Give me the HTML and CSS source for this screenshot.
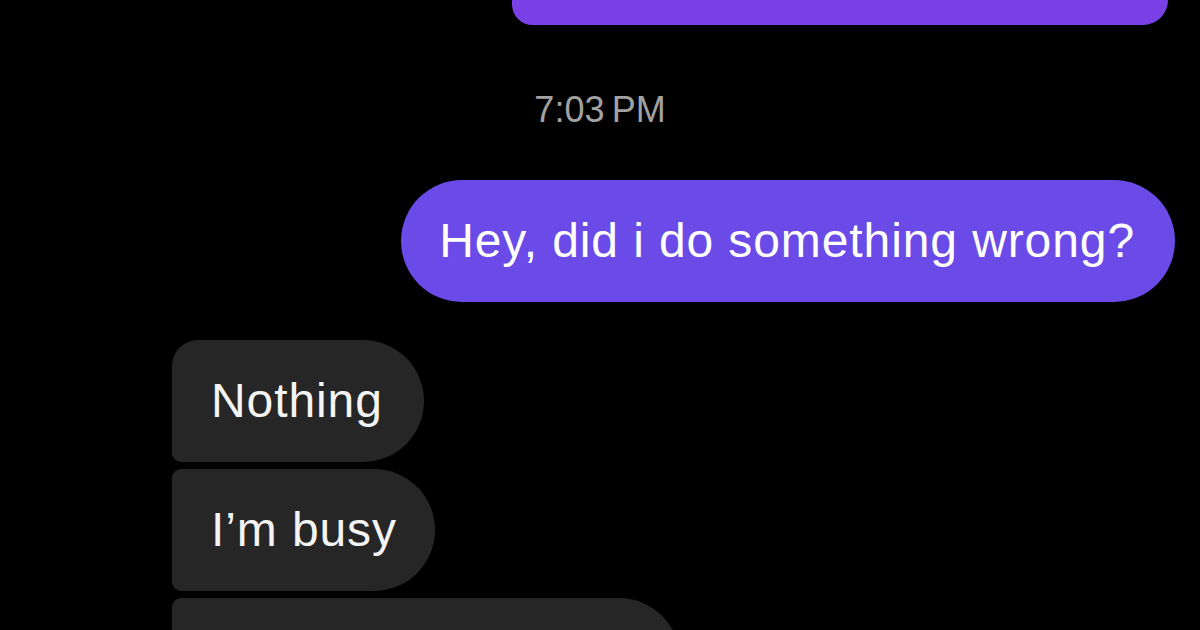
FILE: index.html
```html
<!DOCTYPE html>
<html lang="en">
<head>
<meta charset="utf-8">
<title>Chat</title>
<link rel="stylesheet" href="styles.css">
</head>
<body>
  <main class="thread">
    <div class="row row-out row-prev">
      <div class="bubble bubble-prev"></div>
    </div>
    <div class="time">7:03&#8201;PM</div>
    <div class="row row-out">
      <div class="bubble bubble-out">Hey, did i do something wrong?</div>
    </div>
    <div class="group-in">
      <div class="row row-in">
        <div class="bubble bubble-in first">Nothing</div>
      </div>
      <div class="row row-in">
        <div class="bubble bubble-in middle">I’m busy</div>
      </div>
      <div class="row row-in">
        <div class="bubble bubble-in last wide"></div>
      </div>
    </div>
  </main>
</body>
</html>
```

FILE: styles.css
```css
* { box-sizing: border-box; }

html, body {
  margin: 0;
  padding: 0;
  background: #000;
  width: 1200px;
  height: 630px;
  overflow: hidden;
}

body {
  font-family: "Liberation Sans", Arial, sans-serif;
  color: #f4f4f4;
}

.thread {
  display: flex;
  flex-direction: column;
  width: 1200px;
}

.row {
  display: flex;
}

.row-out {
  justify-content: flex-end;
  padding-right: 25px;
}

.row-prev {
  padding-right: 32px;
}

.row-in {
  justify-content: flex-start;
  padding-left: 172px;
}

.bubble {
  font-size: 48px;
  letter-spacing: 0.9px;
  line-height: 56px;
  height: 122px;
  padding: 33px 41px 33px 39px;
  white-space: nowrap;
}

.bubble-prev {
  width: 656px;
  height: 25px;
  padding: 0;
  background: #7a41e7;
  border-radius: 0 0 44px 36px;
}

.time {
  margin-top: 63px;
  height: 44px;
  line-height: 44px;
  font-size: 36px;
  text-align: center;
  color: #a2a2a2;
}

.bubble-out {
  margin-top: 48px;
  background: #6b4be7;
  border-radius: 61px;
  padding-left: 38px;
  padding-right: 40px;
  color: #fff;
}

.group-in {
  display: flex;
  flex-direction: column;
  gap: 7px;
  margin-top: 38px;
}

.bubble-in {
  background: #262626;
}

.bubble-in.first {
  border-radius: 26px 61px 61px 9px;
}

.bubble-in.middle {
  border-radius: 9px 61px 61px 9px;
  padding-right: 38px;
}

.bubble-in.last {
  border-radius: 9px 61px 61px 26px;
}

.bubble-in.wide {
  width: 508px;
}
```
